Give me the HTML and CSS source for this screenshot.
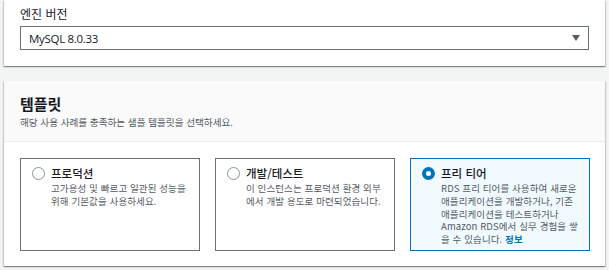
FILE: index.html
```html
<!DOCTYPE html>
<html lang="ko">
<head>
<meta charset="utf-8">
<link rel="stylesheet" href="styles.css">
</head>
<body>
  <section class="panel panel-engine">
    <div class="field-label">엔진 버전</div>
    <div class="select">
      <span class="select-value">MySQL 8.0.33</span>
      <span class="caret"></span>
    </div>
  </section>

  <section class="panel panel-template">
    <header class="panel-header">
      <h2 class="panel-title">템플릿</h2>
      <p class="panel-desc">해당 사용 사례를 충족하는 샘플 템플릿을 선택하세요.</p>
    </header>
    <div class="panel-body">
      <div class="tiles">
        <div class="tile">
          <span class="radio"></span>
          <div class="tile-text">
            <div class="tile-title">프로덕션</div>
            <div class="tile-desc">고가용성 및 빠르고 일관된 성능을<br>위해 기본값을 사용하세요.</div>
          </div>
        </div>
        <div class="tile">
          <span class="radio"></span>
          <div class="tile-text">
            <div class="tile-title">개발/테스트</div>
            <div class="tile-desc">이 인스턴스는 프로덕션 환경 외부<br>에서 개발 용도로 마련되었습니다.</div>
          </div>
        </div>
        <div class="tile tile-selected">
          <span class="radio radio-on"></span>
          <div class="tile-text">
            <div class="tile-title">프리 티어</div>
            <div class="tile-desc">RDS 프리 티어를 사용하여 새로운<br>애플리케이션을 개발하거나, 기존<br>애플리케이션을 테스트하거나<br>Amazon RDS에서 실무 경험을 쌓<br>을 수 있습니다. <a class="info" href="#">정보</a></div>
          </div>
        </div>
      </div>
    </div>
  </section>
</body>
</html>
```

FILE: styles.css
```css
* { box-sizing: border-box; }
html, body { margin: 0; }
body {
  background: #f2f3f3;
  padding: 0 4px;
  font-family: "Noto Sans CJK KR", "Noto Sans", "Open Sans", sans-serif;
  color: #16191f;
  width: 609px;
  height: 270px;
  overflow: hidden;
}
.panel {
  background: #fff;
  box-shadow: 0 1px 1px 0 rgba(0,28,36,.3), 1px 1px 1px 0 rgba(0,28,36,.15), -1px 1px 1px 0 rgba(0,28,36,.15);
}
.panel-engine {
  padding: 6px 16px 16px;
}
.field-label {
  font-size: 12px;
  line-height: 16px;
  margin-bottom: 4px;
  color: #16191f;
}
.select {
  height: 24px;
  border: 1px solid #687078;
  display: flex;
  align-items: center;
  justify-content: space-between;
  padding: 0 8px 0 8px;
}
.select-value {
  font-family: "Open Sans", "Noto Sans", sans-serif;
  font-size: 11.5px;
  letter-spacing: -0.3px;
  color: #16191f;
}
.caret {
  width: 0; height: 0;
  border-left: 4px solid transparent;
  border-right: 4px solid transparent;
  border-top: 6px solid #545b64;
}
.panel-template {
  margin-top: 15px;
}
.panel-header {
  background: #fafafa;
  border-bottom: 1px solid #eaeded;
  padding: 12px 16px 13px;
  height: 61px;
}
.panel-title {
  margin: 0;
  font-size: 15px;
  line-height: 22px;
  font-weight: 700;
  color: #16191f;
}
.panel-desc {
  margin: 0;
  font-size: 9.6px;
  line-height: 14px;
  color: #545b64;
}
.panel-body {
  padding: 16px 16px 15px;
}
.tiles {
  display: grid;
  grid-template-columns: repeat(3, 180px);
  column-gap: 15px;
}
.tile {
  height: 93px;
  border: 1px solid #687078;
  display: flex;
  align-items: flex-start;
  padding: 7px 4px 0 11px;
  gap: 6px;
}
.tile-selected {
  border-color: #0073bb;
  background: #f1faff;
}
.radio {
  flex: none;
  width: 13px;
  height: 13px;
  border-radius: 50%;
  border: 1px solid #879596;
  background: #fff;
  margin-top: 1px;
}
.radio-on {
  border: 4px solid #0073bb;
}
.tile-text { min-width: 0; }
.tile-title {
  font-size: 11.5px;
  line-height: 15px;
  color: #16191f;
  font-weight: 500;
}
.tile-desc {
  margin-top: 1px;
  font-size: 9.5px;
  line-height: 12.8px;
  letter-spacing: 0.1px;
  color: #545b64;
  white-space: nowrap;
}
.info {
  color: #0073bb;
  text-decoration: none;
  font-weight: 700;
}
```
